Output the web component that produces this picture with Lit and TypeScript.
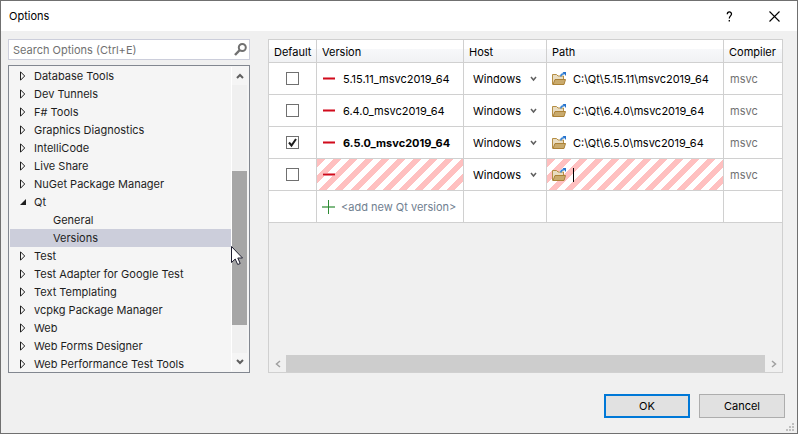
import { LitElement, html, svg, css, nothing } from "lit";
import { customElement, state } from "lit/decorators.js";
import { classMap } from "lit/directives/class-map.js";

interface TreeNode { label: string; open?: boolean; child?: boolean; selected?: boolean }
interface Version { name: string; path: string; isDefault?: boolean; invalid?: boolean }

const closedArrow = svg`<path d="M.5.8V9.200L4.700 5Z" fill="none" stroke="#1e1e1e"/>`;
const openArrow = svg`<path d="M6 2V8H0Z" fill="#1e1e1e"/>`;

@customElement("app-root")
export class AppRoot extends LitElement {
  @state() private nodes: TreeNode[] = [
    { label: "Database Tools" }, { label: "Dev Tunnels" }, { label: "F# Tools" },
    { label: "Graphics Diagnostics" }, { label: "IntelliCode" }, { label: "Live Share" },
    { label: "NuGet Package Manager" }, { label: "Qt", open: true },
    { label: "General", child: true }, { label: "Versions", child: true, selected: true },
    { label: "Test" }, { label: "Test Adapter for Google Test" }, { label: "Text Templating" },
    { label: "vcpkg Package Manager" }, { label: "Web" }, { label: "Web Forms Designer" },
    { label: "Web Performance Test Tools" },
  ];

  @state() private versions: Version[] = [
    { name: "5.15.11_msvc2019_64", path: "C:\\Qt\\5.15.11\\msvc2019_64" },
    { name: "6.4.0_msvc2019_64", path: "C:\\Qt\\6.4.0\\msvc2019_64" },
    { name: "6.5.0_msvc2019_64", path: "C:\\Qt\\6.5.0\\msvc2019_64", isDefault: true },
    { name: "", path: "", invalid: true },
  ];

  static styles = css`
    :host { display: block; font: 11px/18px Inter, "Noto Sans", sans-serif; color: #000; }
    * { box-sizing: border-box; }
    button, input, select { font: inherit; color: inherit; margin: 0; padding: 0; border: 0; background: none; border-radius: 0; outline: none; appearance: none; }
    svg { display: block; flex: none; }
    .window { position: relative; display: flex; flex-direction: column; min-height: 100vh; border: 1px solid #707070; background: #f0f0f0; }
    .titlebar { display: flex; align-items: center; height: 30px; background: #fff; padding-left: 8px; }
    .titlebar h1 { flex: 1; margin: 0; font-size: 11px; font-weight: 400; }
    .caption { display: flex; align-items: center; justify-content: center; width: 45px; height: 30px; }
    .body { flex: 1; display: grid; grid-template-columns: 242px minmax(0, 1fr); gap: 18px; padding: 8px 14px 0 7px; }
    .side { display: flex; flex-direction: column; gap: 5px; min-height: 0; }
    .search { display: flex; align-items: center; height: 21px; border: 1px solid #cccedb; background: #fff; padding: 0 2px 0 4px; }
    .search input { flex: 1; min-width: 0; }
    .search input::placeholder { color: #717171; opacity: 1; }
    .tree { flex: 1 1 0; min-height: 0; display: flex; border: 1px solid #828790; background: #f5f5f5; padding: 1px; overflow: hidden; color: #1e1e1e; }
    .nodes { flex: 1; list-style: none; margin: 0; padding: 0; border-right: 1px solid #fff; }
    .node { display: flex; align-items: center; gap: 6px; height: 18px; padding-left: 10px; white-space: nowrap; }
    .child { padding-left: 43px; }
    .selected { background: #cccedb; }
    .vbar { display: grid; grid-template-rows: 18px 1fr 18px; width: 16px; padding-right: 1px; justify-items: center; align-items: center; position: relative; }
    .vtrack { display: grid; grid-template-rows: 86fr 154fr 28fr; width: 100%; height: 100%; background: #f0f0f0; }
    .vthumb { grid-row: 2; background: #a6a6a6; }
    .cursor { position: absolute; left: -1px; top: 179px; }
    .panel { display: flex; flex-direction: column; justify-content: space-between; border: 1px solid #d0d0d0; border-top: 0; }
    table { width: 100%; table-layout: fixed; border-collapse: separate; border-spacing: 0; background: #fff; }
    th, td { padding: 0; border: solid #d0d0d0; border-width: 0 1px 1px 0; text-align: left; white-space: nowrap; }
    tr > :last-child { border-right: 0; }
    th { height: 24px; font-weight: 400; padding: 2px 0 0 5px; border-top-width: 1px; background: linear-gradient(#fff 0 40%, #f7f8fa 40%, #f1f2f4); }
    td { height: 32px; }
    .c-default { width: 48px; } .c-version { width: 147px; } .c-host { width: 83px; } .c-compiler { width: 58px; }
    .tickwrap { position: relative; display: block; width: 13px; margin-left: 17px; }
    .tick { display: block; width: 13px; height: 13px; border: 1px solid #707070; background: #fff; }
    .tickwrap svg { position: absolute; left: 0; top: 0; pointer-events: none; }
    .cell { display: flex; align-items: center; gap: 8px; padding-left: 6px; }
    .cell input { flex: 1; min-width: 0; }
    .invalid { background: linear-gradient(135deg, #ffc0c0 25%, #fff 25% 50%, #ffc0c0 50% 75%, #fff 75%) 0 0 / 16px 16px padding-box; }
    .bold { font-weight: 700; }
    .host { display: flex; align-items: center; padding: 0 9px; }
    .host select { flex: 1; min-width: 0; }
    .muted { color: #717171; padding-left: 6px; }
    .add { display: flex; align-items: center; gap: 6px; padding-left: 5px; color: #708090; }
    .path { gap: 6px; padding-left: 5px; }
    .field { position: relative; flex: 1; display: flex; min-width: 0; }
    .caret::before { content: ""; position: absolute; left: 0; top: 2px; width: 1px; height: 14px; background: #000; }
    .hbar { display: grid; grid-template-columns: 17px 1fr 17px; height: 17px; align-items: center; justify-items: center; }
    .hthumb { width: 100%; height: 100%; background: #cdcdcd; }
    .actions { display: flex; justify-content: flex-end; gap: 9px; padding: 21px 12px 15px; }
    .actions button { width: 86px; height: 24px; background: #e1e1e1; border: 1px solid #adadad; }
    .actions .primary { border: 2px solid #0078d7; }
    .grip { position: absolute; right: 3px; bottom: 2px; }
  `;

  private minus() {
    return html`<button aria-label="Remove version"><svg width="12" height="12"><path d="M0 4h12v3H0z" fill="#e8808a"/><path d="M0 5h12v1H0z" fill="#d00c1c"/></svg></button>`;
  }

  private folder() {
    return html`<button aria-label="Browse"><svg width="15" height="14" viewBox="0 0 15 14">
      <path d="M.5 12.500V2.500H4.500L6 4h5.500v3" fill="#e9dcc0" stroke="#b58e44"/>
      <path d="M1 12.500 3 7.500H13.500L12 12.500Z" fill="#c9aa6c" stroke="#ab8136"/>
      <path d="M8.800 4.500C8.800 2.500 10 1.800 12 1.800" fill="none" stroke="#3a86d8" stroke-width="1.500"/>
      <path d="M10.500 0H14V4Z" fill="#2572cc"/></svg></button>`;
  }

  private row(v: Version) {
    const shade = { invalid: !!v.invalid };
    return html`<tr>
      <td><span class="tickwrap"><input class="tick" type="checkbox" aria-label="Default" .checked=${!!v.isDefault}>
        ${v.isDefault ? html`<svg width="13" height="13"><path d="M3 6.500 5.500 9.500 10 3" fill="none" stroke="#1e1e1e" stroke-width="2"/></svg>` : nothing}</span></td>
      <td class=${classMap(shade)}><div class="cell">${this.minus()}<input aria-label="Version" class=${classMap({ bold: !!v.isDefault })} .value=${v.name}></div></td>
      <td><div class="host"><select aria-label="Host"><option>Windows</option></select>
        <svg width="7" height="6"><path d="M1 1 3.500 4 6 1" fill="none" stroke="#606060" stroke-width="1.500"/></svg></div></td>
      <td class=${classMap(shade)}><div class="cell path">${this.folder()}<span class=${classMap({ field: true, caret: !!v.invalid })}><input aria-label="Path" .value=${v.path}></span></div></td>
      <td class="muted">msvc</td>
    </tr>`;
  }

  render() {
    return html`<main class="window">
      <header class="titlebar"><h1>Options</h1>
        <button class="caption" aria-label="Help"><svg width="7" height="11"><path d="M1.300 3.200C1.300.2 5.500.2 5.500 3 5.500 4.800 3.300 5 3.300 7.500M3.300 9V10.500" fill="none" stroke="#000" stroke-width="1.300"/></svg></button>
        <button class="caption" aria-label="Close"><svg width="11" height="11"><path d="M.5.5l10 10M10.500.5l-10 10" stroke="#000" stroke-width="1.100"/></svg></button>
      </header>
      <div class="body">
        <section class="side">
          <div class="search"><input type="text" aria-label="Search Options" placeholder="Search Options (Ctrl+E)">
            <svg width="13" height="13"><circle cx="8.300" cy="4.500" r="3.500" fill="none" stroke="#717171" stroke-width="2"/><path d="M5.800 7 1 12" stroke="#717171" stroke-width="2.500"/></svg></div>
          <div class="tree">
            <ul class="nodes" role="tree">${this.nodes.map(n => html`<li role="treeitem" class=${classMap({ node: true, child: !!n.child, selected: !!n.selected })}>
              ${n.child ? nothing : html`<svg width="8" height="10">${n.open ? openArrow : closedArrow}</svg>`}<span>${n.label}</span></li>`)}</ul>
            <div class="vbar">
              <svg width="8" height="6"><path d="M1 5 4 2 7 5" fill="none" stroke="#606060" stroke-width="2"/></svg>
              <div class="vtrack"><div class="vthumb"></div></div>
              <svg width="8" height="6"><path d="M1 1 4 4 7 1" fill="none" stroke="#606060" stroke-width="2"/></svg>
              <svg class="cursor" width="13" height="20"><path d="M.5.5V16.500L4.200 13 6.700 18.500 9.200 17.500 6.800 12H11.500Z" fill="#fff" stroke="#1e1e30"/></svg>
            </div>
          </div>
        </section>
        <section class="panel">
          <table>
            <colgroup><col class="c-default"><col class="c-version"><col class="c-host"><col><col class="c-compiler"></colgroup>
            <thead><tr><th>Default</th><th>Version</th><th>Host</th><th>Path</th><th>Compiler</th></tr></thead>
            <tbody>${this.versions.map(v => this.row(v))}
              <tr><td></td><td><button class="add"><svg width="13" height="14"><path d="M0 7h13" stroke="#7fb982" stroke-width="2"/><path d="M6.500 0v14" stroke="#2e8b34"/></svg>&lt;add new Qt version&gt;</button></td><td></td><td></td><td></td></tr>
            </tbody>
          </table>
          <div class="hbar">
            <svg width="6" height="8"><path d="M5 1 1.500 4 5 7" fill="none" stroke="#a0a0a0" stroke-width="1.500"/></svg>
            <div class="hthumb"></div>
            <svg width="6" height="8"><path d="M1 1 4.500 4 1 7" fill="none" stroke="#a0a0a0" stroke-width="1.500"/></svg>
          </div>
        </section>
      </div>
      <footer class="actions"><button class="primary">OK</button><button>Cancel</button></footer>
      <svg class="grip" width="8" height="8" fill="#bfbfbf"><path d="M6 0h2v2H6zM3 3h2v2H3zM6 3h2v2H6zM0 6h2v2H0zM3 6h2v2H3zM6 6h2v2H6z"/></svg>
    </main>`;
  }
}
